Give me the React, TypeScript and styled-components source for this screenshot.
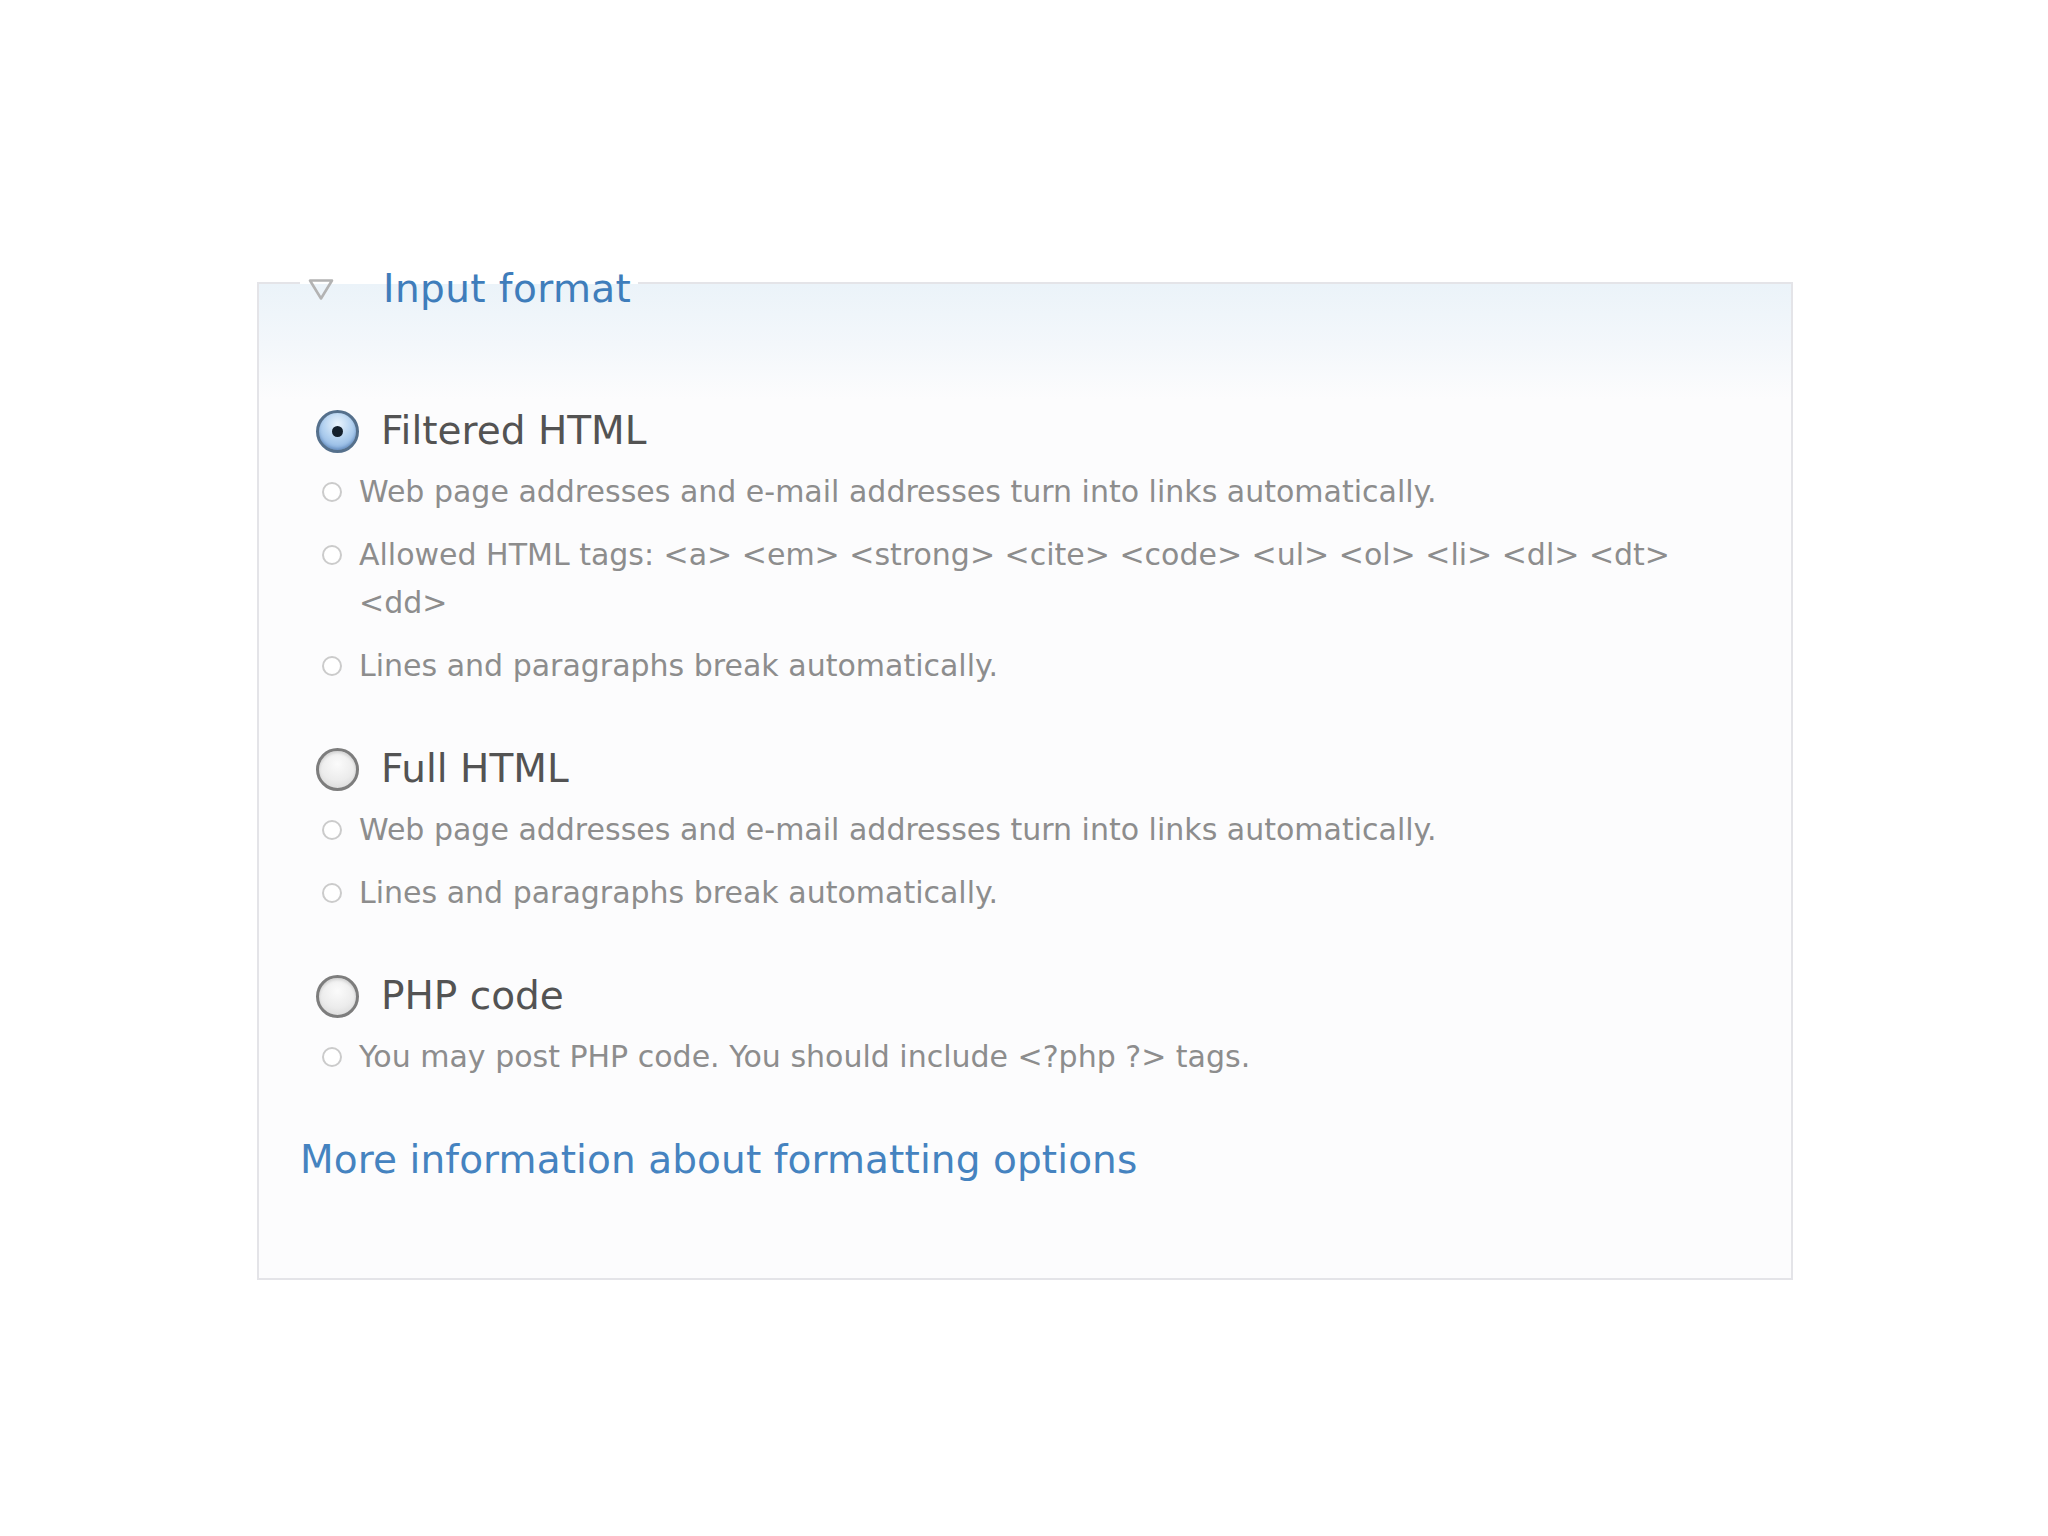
import React from "react";
import styled, { createGlobalStyle } from "styled-components";

const GlobalStyle = createGlobalStyle`
  html, body {
    margin: 0;
    padding: 0;
    background: #ffffff;
  }
  body {
    font-family: "DejaVu Sans", Verdana, sans-serif;
  }
`;

const Page = styled.div`
  padding: 254px 0 200px 257px;
`;

const Fieldset = styled.fieldset`
  box-sizing: border-box;
  width: 1536px;
  margin: 0;
  padding: 96px 41px 94px 41px;
  border: 2px solid #e4e4e8;
  background: linear-gradient(
    to bottom,
    #ebf3f9 0px,
    #f3f7fb 60px,
    #fcfcfd 115px,
    #fcfcfd 100%
  );
  min-inline-size: 0;
`;

const Legend = styled.legend`
  display: flex;
  align-items: center;
  gap: 48px;
  padding: 12px 7px 0 7px;
  margin: 0;
  line-height: 45px;
  font-size: 39px;
  letter-spacing: 0.4px;
  color: #3f7dbb;
`;

const Toggle = styled.svg`
  width: 28px;
  height: 24px;
  flex: none;
`;

const Groups = styled.div`
  display: flex;
  flex-direction: column;
  gap: 55px;
`;

const Group = styled.div`
  display: flex;
  flex-direction: column;
  padding-left: 16px;
`;

const OptionRow = styled.label`
  display: flex;
  align-items: center;
  gap: 22px;
  height: 48px;
  font-size: 39px;
  line-height: 48px;
  color: #535353;
`;

const BigRadio = styled.span<{ $checked?: boolean }>`
  position: relative;
  box-sizing: border-box;
  width: 43px;
  height: 43px;
  flex: none;
  border-radius: 50%;
  border: 3px solid ${(p) => (p.$checked ? "#55708c" : "#7d7d7d")};
  background: ${(p) =>
    p.$checked
      ? "radial-gradient(circle at 50% 30%, #eaf4fd 0%, #b4d2f0 45%, #7aa6da 100%)"
      : "radial-gradient(circle at 50% 35%, #fbfbfb 0%, #ececec 55%, #d2d2d2 100%)"};
  box-shadow: ${(p) =>
    p.$checked
      ? "inset 0 -2px 3px rgba(40, 80, 140, 0.35)"
      : "inset 0 2px 3px rgba(0, 0, 0, 0.12)"};

  &::after {
    content: "";
    display: ${(p) => (p.$checked ? "block" : "none")};
    position: absolute;
    left: 50%;
    top: 50%;
    width: 11px;
    height: 11px;
    margin: -5.5px 0 0 -5.5px;
    border-radius: 50%;
    background: #14202c;
  }
`;

const Tips = styled.ul`
  list-style: none;
  margin: 13px 0 0 0;
  padding: 0 0 0 6px;
  display: flex;
  flex-direction: column;
  gap: 15px;
  max-width: 1390px;
`;

const Tip = styled.li`
  display: flex;
  align-items: flex-start;
  gap: 17px;
  font-size: 30px;
  line-height: 48px;
  color: #8d8d8d;
`;

const SmallRadio = styled.span`
  box-sizing: border-box;
  width: 20px;
  height: 20px;
  flex: none;
  margin-top: 14px;
  border-radius: 50%;
  border: 2px solid #cbcbcb;
  background: #ffffff;
`;

const MoreLink = styled.a`
  display: block;
  font-size: 39px;
  line-height: 48px;
  letter-spacing: 0.1px;
  color: #4583c0;
  text-decoration: none;
`;

const formats = [
  {
    name: "Filtered HTML",
    checked: true,
    tips: [
      "Web page addresses and e-mail addresses turn into links automatically.",
      "Allowed HTML tags: <a> <em> <strong> <cite> <code> <ul> <ol> <li> <dl> <dt> <dd>",
      "Lines and paragraphs break automatically.",
    ],
  },
  {
    name: "Full HTML",
    checked: false,
    tips: [
      "Web page addresses and e-mail addresses turn into links automatically.",
      "Lines and paragraphs break automatically.",
    ],
  },
  {
    name: "PHP code",
    checked: false,
    tips: ["You may post PHP code. You should include <?php ?> tags."],
  },
];

export default function App() {
  return (
    <>
      <GlobalStyle />
      <Page>
        <Fieldset>
          <Legend>
            <Toggle viewBox="0 0 28 24" aria-hidden="true">
              <path
                d="M3 3.5 L25 3.5 L14 21.5 Z"
                fill="none"
                stroke="#b3b3b3"
                strokeWidth="2.6"
                strokeLinejoin="round"
              />
            </Toggle>
            <span>Input format</span>
          </Legend>
          <Groups>
            {formats.map((f) => (
              <Group key={f.name}>
                <OptionRow>
                  <BigRadio $checked={f.checked} />
                  {f.name}
                </OptionRow>
                <Tips>
                  {f.tips.map((t) => (
                    <Tip key={t}>
                      <SmallRadio />
                      <span>{t}</span>
                    </Tip>
                  ))}
                </Tips>
              </Group>
            ))}
            <MoreLink href="#">More information about formatting options</MoreLink>
          </Groups>
        </Fieldset>
      </Page>
    </>
  );
}
